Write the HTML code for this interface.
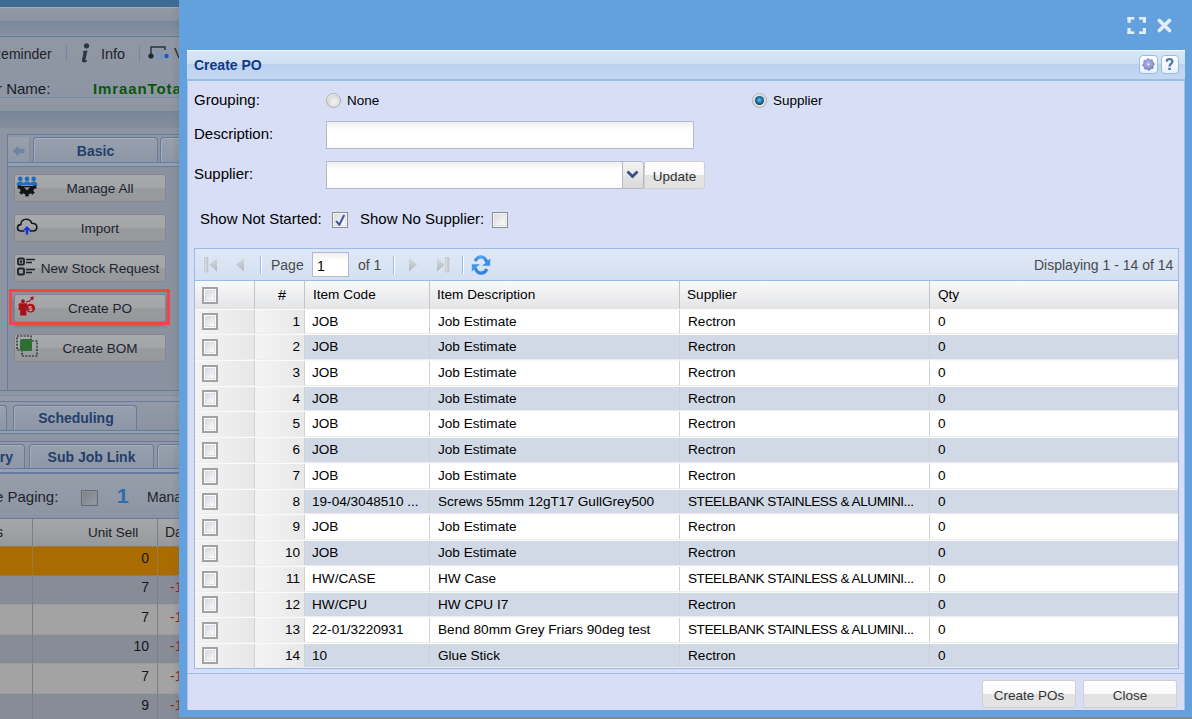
<!DOCTYPE html>
<html><head><meta charset="utf-8">
<style>
*{box-sizing:border-box;margin:0;padding:0}
html,body{width:1192px;height:719px;overflow:hidden;background:#86888c;font-family:"Liberation Sans",sans-serif}
.abs{position:absolute}
#bg{position:absolute;left:0;top:0;width:1192px;height:719px;overflow:hidden}
#modal{position:absolute;left:179px;top:0;width:1013px;height:717px;background:#62a1dd}
.ph{position:absolute;left:187px;top:50px;width:998px;height:31px;background:linear-gradient(#d8e6f5 0,#cfdff3 13px,#b9cfee 13px,#bdd2ef 14.5px,#c5d8f1 28px);border-top:1px solid #f4f8fd;border-bottom:2px solid #99bbe8}
.pt{position:absolute;left:194px;top:57px;font-weight:bold;font-size:14px;color:#0f3b85}
.body{position:absolute;left:187px;top:81px;width:998px;height:629px;background:#d7def6;border-left:1px solid #aac4ec;border-right:1px solid #a4c0ea}
.lbl{position:absolute;font-size:15px;color:#000;line-height:17px}
.inp{position:absolute;background:#fff linear-gradient(#eef0f1,#fff 8px);border:1px solid #b5b8c8}
.radio{position:absolute;width:15px;height:15px;border-radius:50%;background:radial-gradient(circle at 55% 60%,#f4f4f4 0,#e2e2e2 45%,#d6d6d6 62%,#f2f2f2 68%,#cfcfcf 85%);border:1.5px solid #b0b0b0}
.cbx{position:absolute;width:16px;height:16px;border:1.5px solid #8e8e8e;background:linear-gradient(135deg,#d2d6de,#f6f6f6 70%);box-shadow:inset 0 0 0 1px #f4f4f4,inset 0 0 0 2px #e0e2e6}
.btn{position:absolute;border:1px solid #d0d0d0;border-radius:3px 3px 2px 2px;background:linear-gradient(#fff 0,#f9f9f9 50%,#e3e3e3 50%,#e3e3e3 100%);color:#333;font-size:14px;text-align:center}
#grid{position:absolute;left:194px;top:248px;width:985px;height:421px;border:1px solid #99bbe8;background:#fff;overflow:hidden}
.tb{position:absolute;left:195px;top:249px;width:983px;height:32px;background:linear-gradient(#dfe8f6,#d3e0f2);border-bottom:1px solid #99bbe8}
.hd{position:absolute;left:195px;top:281px;width:983px;height:28px;background:linear-gradient(#f9f9f9,#e3e4e6)}
.hc{position:absolute;top:281px;height:28px;font-size:13.6px;color:#000;padding-left:9px;line-height:28px;border-right:1px solid #c5c5c5}
.row{position:absolute;left:195px;width:983px;background:#fff;border-top:1px solid #fafafa;border-bottom:1px solid #ededed}
.row.alt{background:#d1d9e6}
.row .c0{position:absolute;left:0;top:0;bottom:0;width:60px;background:linear-gradient(90deg,#f4f4f4,#e7e7e7);border-right:1px solid #d0d0d0}
.row .c1{position:absolute;left:60px;top:0;bottom:0;width:50px;background:linear-gradient(90deg,#f4f4f4,#e8e8e8);border-right:1px solid #d0d0d0;font-size:13.6px;text-align:right;padding-right:4px;line-height:15px}
.row .cc{position:absolute;top:0;bottom:0;font-size:13.6px;padding-left:8px;line-height:15px;border-right:1px solid #d0d0d0;white-space:nowrap;overflow:hidden}

.cb{position:absolute;width:16px;height:17px;border:2px solid #a2a2a2;background:linear-gradient(135deg,#cdd1da,#f7f7f7 75%);box-shadow:inset 0 0 0 1px #fbfbfb,inset 0 0 0 2px #dcdfe5}
.pg{position:absolute;font-size:14px;color:#4a4a4a;line-height:16px}
.bt{color:#1f232b;line-height:17px;white-space:nowrap}
.tab{border:1px solid #657b9f;border-bottom:0;border-radius:4px 4px 0 0;background:linear-gradient(#97a0ae,#8d96a5);box-shadow:inset 1px 1px 0 #a4acb8;font-size:14px;font-weight:bold;color:#223f6c;text-align:center;line-height:25px;white-space:nowrap;overflow:hidden}
.lb{left:14px;width:152px;height:28px;border:1px solid #86878a;border-radius:3px;background:linear-gradient(#a8a9ab 0,#a4a5a7 50%,#9a9b9e 50%,#97989b 100%);font-size:13.5px;color:#1c2433;text-align:center;line-height:27px;white-space:nowrap;padding-left:20px}
.gt{font-size:14px;color:#1a1d22;line-height:17px;white-space:nowrap}
.gn{left:100px;width:49px;text-align:right;font-size:14px;color:#14171c;line-height:17px}
.rd{left:170px;font-size:14px;color:#a41414;line-height:17px}
.sep{position:absolute;width:2px;border-left:1px solid #99bbe8;border-right:1px solid #fff}
</style></head><body>
<div id="bg">
<div class="abs" style="left:0;top:0;width:179px;height:719px;background:#8d94a2"></div>
<div class="abs" style="left:0;top:0;width:179px;height:7px;background:#3f6a94"></div>
<div class="abs" style="left:0;top:7px;width:179px;height:1px;background:#a6a9ae"></div>
<div class="abs" style="left:0;top:8px;width:179px;height:13px;background:linear-gradient(#939aa5,#8a93a0)"></div>
<div class="abs" style="left:0;top:21px;width:179px;height:1px;background:#7489a3"></div>
<div class="abs" style="left:0;top:22px;width:179px;height:14px;background:linear-gradient(#7a889b,#8692a2)"></div>
<div class="abs" style="left:0;top:36px;width:179px;height:1px;background:#64799a"></div>
<div class="abs" style="left:0;top:37px;width:179px;height:60px;background:linear-gradient(#9097a4,#8d94a3)"></div>
<!-- toolbar -->
<div class="abs bt" style="left:-9px;top:45.5px;font-size:14px">Reminder</div>
<div class="abs" style="left:66px;top:45px;width:1px;height:17px;background:#6f87aa"></div>
<svg class="abs" style="left:80px;top:43px" width="10" height="20" viewBox="0 0 10 20"><circle cx="6.5" cy="2.8" r="2.6" fill="#2c3440"/><path d="M3.5 8L7.5 7.5L5.5 16Q5 18 7 17L6.5 19Q1.5 20.5 2 17L3.6 9.5L2.6 9.2Z" fill="#2c3440"/></svg>
<div class="abs bt" style="left:101px;top:46px;font-size:14.5px">Info</div>
<div class="abs" style="left:139px;top:45px;width:1px;height:17px;background:#6f87aa"></div>
<svg class="abs" style="left:148px;top:45px" width="22" height="15" viewBox="0 0 22 15"><path d="M3 10V2H17V5" fill="none" stroke="#2c3440" stroke-width="1.5"/><circle cx="3" cy="11" r="2.6" fill="#1e2430"/><rect x="9" y="9" width="5" height="4" fill="none" stroke="#6b9ad0" stroke-width="1.2"/><circle cx="18.5" cy="11" r="2.2" fill="#1f55c8"/></svg>
<div class="abs bt" style="left:174px;top:44px;font-size:15px">V</div>
<!-- name row -->
<div class="abs" style="left:-3px;top:80px;font-size:15px;color:#1a1d24">r Name:</div>
<div class="abs" style="left:93px;top:80px;font-size:15px;letter-spacing:0.9px;font-weight:bold;color:#0b550b;white-space:nowrap">ImraanTotal</div>
<div class="abs" style="left:0;top:97px;width:179px;height:1px;background:#7489a6"></div>
<div class="abs" style="left:0;top:98px;width:179px;height:14px;background:linear-gradient(#9299a4,#8b94a0)"></div>
<div class="abs" style="left:0;top:111px;width:179px;height:1px;background:#71849e"></div><div class="abs" style="left:0;top:112px;width:179px;height:16px;background:linear-gradient(#798799,#838e9e)"></div>
<div class="abs" style="left:0;top:128px;width:179px;height:6px;background:#8d94a2"></div>
<!-- left tab panel -->
<div class="abs" style="left:7px;top:134px;width:180px;height:257px;border:1px solid #657b9f;background:#8a91a0"></div>
<div class="abs" style="left:8px;top:135px;width:172px;height:27px;background:linear-gradient(#8f96a4,#8a92a1)"></div>
<div class="abs" style="left:8px;top:137px;width:22px;height:25px;background:linear-gradient(#98a0ad,#8f98a6);border-right:1px solid #7f8ea6"></div>
<svg class="abs" style="left:12px;top:145px" width="13" height="12" viewBox="0 0 13 12"><path d="M6.5 0.5L0.8 6L6.5 11.5V8.2H12.5V3.8H6.5Z" fill="#6d84a5"/></svg>
<div class="abs tab" style="left:33px;top:137px;width:125px;height:26px;line-height:27px">Basic</div>
<div class="abs tab" style="left:160px;top:137px;width:60px;height:26px"></div>
<div class="abs" style="left:8px;top:162px;width:172px;height:1px;background:#657b9f"></div>
<div class="abs" style="left:8px;top:163px;width:172px;height:3px;background:#96a0b0"></div>
<div class="abs" style="left:8px;top:166px;width:172px;height:1px;background:#657b9f"></div>
<div class="abs lb" style="top:174px">Manage All</div>
<div class="abs lb" style="top:214px">Import</div>
<div class="abs lb" style="top:254px">New Stock Request</div>
<div class="abs lb" style="top:294px;box-shadow:0 3px 4px rgba(40,45,60,.45)">Create PO</div>
<div class="abs" style="left:9px;top:289px;width:161px;height:36px;border:3px solid #f24646"></div>
<div class="abs lb" style="top:334px">Create BOM</div>
<!-- icons -->
<svg class="abs" style="left:16px;top:176px" width="22" height="22" viewBox="0 0 22 22"><g fill="#1b6fc0"><circle cx="4.3" cy="2.9" r="2.3"/><circle cx="11" cy="2.9" r="2.3"/><circle cx="17.7" cy="2.9" r="2.3"/><path d="M0.6 9.2Q0.6 5.6 4.3 5.6Q8 5.6 8 9.2Z"/><path d="M7.3 9.2Q7.3 5.6 11 5.6Q14.7 5.6 14.7 9.2Z"/><path d="M14 9.2Q14 5.6 17.7 5.6Q21.4 5.6 21.4 9.2Z"/></g><rect x="2" y="10" width="18" height="1.2" fill="#121418"/><g fill="#121418"><path d="M3.6 11A7.4 7.4 0 0 0 18.4 11Z"/><rect x="9.3" y="17.2" width="3.4" height="3.2" transform="rotate(-90 11 11)"/><rect x="9.3" y="17.2" width="3.4" height="3.2" transform="rotate(-45 11 11)"/><rect x="9.3" y="17.2" width="3.4" height="3.2" transform="rotate(0 11 11)"/><rect x="9.3" y="17.2" width="3.4" height="3.2" transform="rotate(45 11 11)"/><rect x="9.3" y="17.2" width="3.4" height="3.2" transform="rotate(90 11 11)"/></g><path d="M8 11.2H14L11 14.6Z" fill="#8e9096"/></svg>
<svg class="abs" style="left:16px;top:217px" width="22" height="18" viewBox="0 0 22 18"><path d="M8.5 14H5Q1.5 14 1.5 10.8Q1.5 7.8 4.8 7.6Q5.2 2.2 10.2 2.2Q14.5 2.2 15.8 6.2Q20.8 6.2 20.8 10.2Q20.8 14 17 14H13.5" fill="none" stroke="#15181e" stroke-width="1.6"/><path d="M11 9L7.2 13H9.7V17.5H12.3V13H14.8Z" fill="#1436d8"/></svg>
<svg class="abs" style="left:17px;top:257px" width="20" height="20" viewBox="0 0 20 20"><rect x="1" y="1.5" width="6" height="6" rx="1" fill="none" stroke="#1e222a" stroke-width="1.8"/><rect x="2.8" y="3.3" width="2.4" height="2.4" fill="#1e222a"/><path d="M9 2.5H18M9 5.5H15" stroke="#1e222a" stroke-width="1.6"/><rect x="1" y="11.5" width="6" height="6" rx="1" fill="none" stroke="#1e222a" stroke-width="1.8"/><path d="M9 12.5H18M9 15.5H15" stroke="#1e222a" stroke-width="1.6"/></svg>
<svg class="abs" style="left:16px;top:294px" width="20" height="24" viewBox="0 0 20 24"><g fill="#a8101a"><circle cx="7" cy="7.2" r="1.9"/><path d="M2.6 10.5Q2.6 9.2 4 9.2H10Q11.2 9.2 11.4 10.5L11.6 13.5H10.4V21.5H4.2V16H2.6Z"/><circle cx="14.6" cy="14.2" r="4.4"/><path d="M10 7.4Q13 7.2 15 5L14 3.6L17.8 2.2L17.2 6.2L16 5.6Q13.6 8.8 10 8.6Z"/></g><text x="12.3" y="17.2" font-size="7.5" font-family="Liberation Sans" font-weight="bold" fill="#d8a0a4">$</text></svg>
<svg class="abs" style="left:16px;top:335px" width="22" height="22" viewBox="0 0 22 22"><rect x="1" y="1" width="14" height="14" fill="none" stroke="#15181e" stroke-width="1.2" stroke-dasharray="2 1.3"/><rect x="6" y="6" width="15" height="15" fill="none" stroke="#15181e" stroke-width="1.2" stroke-dasharray="2 1.3"/><rect x="4" y="4" width="12" height="12" rx="2" fill="#2f6f35"/></svg>
<!-- tabs 2 -->
<div class="abs" style="left:0;top:390px;width:179px;height:1px;background:#657b9f"></div>
<div class="abs" style="left:0;top:391px;width:179px;height:4px;background:#8f96a3"></div>
<div class="abs" style="left:0;top:395px;width:179px;height:1px;background:#7b8ca6"></div>
<div class="abs" style="left:0;top:396px;width:179px;height:6px;background:#949aa6"></div>
<div class="abs" style="left:0;top:401px;width:179px;height:1px;background:#657b9f"></div>
<div class="abs" style="left:0;top:402px;width:179px;height:28px;background:linear-gradient(#939aa6,#8b93a1)"></div>
<div class="abs tab" style="left:-60px;top:405px;width:67px;height:26px"></div>
<div class="abs tab" style="left:13px;top:405px;width:124px;height:26px;padding-left:2px">Scheduling</div>
<div class="abs" style="left:0;top:430px;width:179px;height:1px;background:#657b9f"></div>
<div class="abs" style="left:0;top:431px;width:179px;height:3px;background:#96a0b0"></div>
<div class="abs" style="left:0;top:433px;width:179px;height:1px;background:#657b9f"></div>
<div class="abs" style="left:0;top:434px;width:179px;height:7px;background:#8f96a3"></div>
<div class="abs" style="left:0;top:441px;width:179px;height:1px;background:#657b9f"></div>
<div class="abs" style="left:0;top:442px;width:179px;height:27px;background:linear-gradient(#939aa6,#8b93a1)"></div>
<div class="abs tab" style="left:-100px;top:444px;width:125px;height:25px;text-align:right;padding-right:11px">ry</div>
<div class="abs tab" style="left:29px;top:444px;width:125px;height:25px">Sub Job Link</div>
<div class="abs tab" style="left:157px;top:444px;width:60px;height:25px"></div>
<div class="abs" style="left:0;top:468px;width:179px;height:1px;background:#657b9f"></div>
<div class="abs" style="left:0;top:469px;width:179px;height:3px;background:#96a0b0"></div>
<div class="abs" style="left:0;top:472px;width:179px;height:2px;background:#657b9f"></div>
<!-- toolbar -->
<div class="abs" style="left:0;top:474px;width:179px;height:44px;background:linear-gradient(#979ea9,#8c94a3)"></div>
<div class="abs" style="left:-5px;top:488px;font-size:15px;color:#1f232b">e Paging:</div>
<div class="abs" style="left:81px;top:490px;width:17px;height:16px;border:1px solid #656a72;background:linear-gradient(135deg,#7a7e86,#9a9ea4);box-shadow:inset 0 0 0 1px #8e9197"></div>
<div class="abs" style="left:117px;top:484px;font-size:21px;font-weight:bold;color:#2a6cb0">1</div>
<div class="abs" style="left:147px;top:489px;font-size:14px;color:#1f232b">Manage</div>
<div class="abs" style="left:0;top:518px;width:179px;height:1px;background:#657b9f"></div>
<!-- grid header -->
<div class="abs" style="left:0;top:519px;width:179px;height:27px;background:linear-gradient(#a6a7a9,#98999c)"></div>
<div class="abs" style="left:32px;top:519px;width:1px;height:200px;background:#7e7f82"></div>
<div class="abs" style="left:157px;top:519px;width:1px;height:200px;background:#7e7f82"></div>
<div class="abs gt" style="left:-4px;top:524px">s</div>
<div class="abs gt" style="left:88px;top:524px;font-size:13.5px">Unit Sell</div>
<div class="abs gt" style="left:165px;top:524px">Date</div>
<!-- rows -->
<div class="abs" style="left:0;top:546px;width:179px;height:30px;background:#a96c00;border-top:1px dotted #858b94;border-bottom:1px dotted #858b94"></div>
<div class="abs" style="left:32px;top:546px;width:1px;height:30px;border-left:1px dotted #858b94"></div>
<div class="abs" style="left:157px;top:546px;width:1px;height:30px;border-left:1px dotted #858b94"></div>
<div class="abs" style="left:0;top:576px;width:179px;height:28px;background:#878c96"></div>
<div class="abs" style="left:0;top:604px;width:179px;height:1px;background:#9c9c9c"></div>
<div class="abs" style="left:0;top:605px;width:179px;height:29px;background:#a3a3a3"></div>
<div class="abs" style="left:0;top:634px;width:179px;height:1px;background:#9c9c9c"></div>
<div class="abs" style="left:0;top:635px;width:179px;height:28px;background:#878c96"></div>
<div class="abs" style="left:0;top:663px;width:179px;height:1px;background:#9c9c9c"></div>
<div class="abs" style="left:0;top:664px;width:179px;height:29px;background:#a3a3a3"></div>
<div class="abs" style="left:0;top:693px;width:179px;height:1px;background:#9c9c9c"></div>
<div class="abs" style="left:0;top:694px;width:179px;height:25px;background:#878c96"></div>
<div class="abs" style="left:32px;top:576px;width:1px;height:143px;background:#7e7f82"></div>
<div class="abs" style="left:157px;top:576px;width:1px;height:143px;background:#7e7f82"></div>
<div class="abs gn" style="top:550px">0</div>
<div class="abs gn" style="top:579px">7</div>
<div class="abs gn" style="top:609px">7</div>
<div class="abs gn" style="top:638px">10</div>
<div class="abs gn" style="top:668px">7</div>
<div class="abs gn" style="top:697px">9</div>
<div class="abs rd" style="top:579px">-1</div>
<div class="abs rd" style="top:609px">-1</div>
<div class="abs rd" style="top:638px">-1</div>
<div class="abs rd" style="top:668px">-1</div>
<div class="abs rd" style="top:697px">-1</div>
<div class="abs" style="left:171px;top:7px;width:8px;height:712px;background:linear-gradient(90deg,rgba(110,100,90,0),rgba(110,100,90,.18))"></div>

</div>
<div id="modal">
  <svg class="abs" style="left:948px;top:17px" width="20" height="18" viewBox="0 0 20 18"><g fill="#e4edf9"><rect x="0.5" y="0" width="6.8" height="2.6"/><rect x="0.5" y="0" width="3.2" height="5.8"/><rect x="12" y="0" width="7" height="2.6"/><rect x="15.8" y="0" width="3.2" height="5.8"/><rect x="0.5" y="11" width="3.2" height="6"/><rect x="0.5" y="14.4" width="6.8" height="2.6"/><rect x="15.8" y="11" width="3.2" height="6"/><rect x="12" y="14.4" width="7" height="2.6"/></g></svg>
  <svg class="abs" style="left:976px;top:16px" width="19" height="19" viewBox="0 0 19 19"><path d="M4.3 4.5L14.5 14.5M14.5 4.5L4.3 14.5" stroke="#e4edf9" stroke-width="3.7" stroke-linecap="round"/></svg>
</div>
<div class="ph"></div>
<div class="pt">Create PO</div>
<div class="abs" style="left:1139px;top:55px;width:19px;height:19px;border:1px solid #99bbe8;border-radius:4px;background:linear-gradient(#fff,#e8f1fb)"></div>
<svg class="abs" style="left:1141px;top:57px" width="15" height="15" viewBox="0 0 15 15"><defs><radialGradient id="gg" cx="0.45" cy="0.4" r="0.6"><stop offset="0" stop-color="#b4b8ec"/><stop offset="1" stop-color="#7c80c4"/></radialGradient></defs><path d="M6.35 1.71 L7.50 1.60 L8.48 2.60 L9.41 2.88 L10.78 2.59 L11.67 3.33 L11.66 4.72 L12.12 5.59 L13.29 6.35 L13.40 7.50 L12.40 8.48 L12.12 9.41 L12.41 10.78 L11.67 11.67 L10.28 11.66 L9.41 12.12 L8.65 13.29 L7.50 13.40 L6.52 12.40 L5.59 12.12 L4.22 12.41 L3.33 11.67 L3.34 10.28 L2.88 9.41 L1.71 8.65 L1.60 7.50 L2.60 6.52 L2.88 5.59 L2.59 4.22 L3.33 3.33 L4.72 3.34 L5.59 2.88Z" fill="url(#gg)" stroke="#6e72b6" stroke-width="0.5"/><circle cx="7.5" cy="7.5" r="0.9" fill="#fff"/></svg>
<div class="abs" style="left:1161px;top:55px;width:18px;height:19px;border:1px solid #99bbe8;border-radius:4px;background:linear-gradient(#fff,#e8f1fb)"></div>
<svg class="abs" style="left:1165px;top:58px" width="9" height="13" viewBox="0 0 9 13"><path d="M1.6 3.6Q1.8 1.2 4.5 1.2Q7.4 1.2 7.4 3.6Q7.4 5 5.8 6Q4.6 6.8 4.6 8.4" fill="none" stroke="#4b7aac" stroke-width="2.3"/><rect x="3.4" y="9.8" width="2.4" height="2.2" rx="0.5" fill="#4b7aac"/></svg>
<div class="body"></div>
<div class="lbl" style="left:194px;top:91px">Grouping:</div>
<div class="lbl" style="left:194px;top:125px">Description:</div>
<div class="lbl" style="left:194px;top:165px">Supplier:</div>
<div class="radio" style="left:326px;top:93px"></div>
<div class="lbl" style="left:347px;top:92px;font-size:13.5px">None</div>
<div class="radio" style="left:752px;top:93px"></div>
<div class="abs" style="left:755px;top:96px;width:9px;height:9px;border-radius:50%;background:radial-gradient(circle at 50% 45%,#6ccaf4 0,#2a90d0 28%,#1a5a88 55%,#13344f 80%)"></div>
<div class="lbl" style="left:773px;top:92px;font-size:13.5px">Supplier</div>
<div class="inp" style="left:326px;top:121px;width:368px;height:28px"></div>
<div class="inp" style="left:326px;top:161px;width:297px;height:28px"></div>
<div class="abs" style="left:622px;top:161px;width:22px;height:28px;border:1px solid #b5b8c8;border-left:1px solid #b5b8c8;border-radius:0 3px 0 0;background:linear-gradient(#f3f3f3,#d9d9d9)"></div>
<svg class="abs" style="left:626px;top:170px" width="13" height="9" viewBox="0 0 13 9"><path d="M1.5 1.5L6.5 6.5L11.5 1.5" fill="none" stroke="#34518c" stroke-width="2.8"/></svg>
<div class="btn" style="left:644px;top:161px;width:61px;height:28px;line-height:29px;font-size:13.5px">Update</div>
<div class="lbl" style="left:200px;top:210px">Show Not Started:</div>
<div class="cbx" style="left:332px;top:212px"></div>
<svg class="abs" style="left:332px;top:212px" width="16" height="16" viewBox="0 0 16 16"><path d="M4.6 9.6L7.4 12.8L11.8 3.8" fill="none" stroke="#4558a8" stroke-width="2.1" stroke-linecap="round" stroke-linejoin="round"/></svg>
<div class="lbl" style="left:360px;top:210px">Show No Supplier:</div>
<div class="cbx" style="left:492px;top:212px"></div>

<div id="grid"></div>
<div class="tb"></div>

<svg width="0" height="0" style="position:absolute"><defs><linearGradient id="tg" x1="0" y1="0" x2="0" y2="1"><stop offset="0" stop-color="#d6d9de"/><stop offset="1" stop-color="#b4b8be"/></linearGradient><linearGradient id="bg2" x1="0" y1="0" x2="1" y2="0"><stop offset="0" stop-color="#e4e6ea"/><stop offset="1" stop-color="#b8bcc2"/></linearGradient><linearGradient id="rg" x1="0" y1="0" x2="0" y2="1"><stop offset="0" stop-color="#52a4f0"/><stop offset="1" stop-color="#2a7ad8"/></linearGradient></defs></svg>
<svg class="abs" style="left:204px;top:257px" width="14" height="16" viewBox="0 0 14 16"><rect x="0.5" y="0.5" width="3.4" height="14.5" fill="url(#bg2)" stroke="#c4c8ce" stroke-width="0.8"/><path d="M13 1V14.5L5.5 7.75Z" fill="url(#tg)"/></svg>
<svg class="abs" style="left:235px;top:257px" width="10" height="16" viewBox="0 0 10 16"><path d="M9 1V14.5L1 7.75Z" fill="url(#tg)"/></svg>
<div class="sep" style="left:260px;top:256px;height:18px"></div>
<div class="pg" style="left:271px;top:257px">Page</div>
<div class="inp" style="left:312px;top:252px;width:37px;height:25px"></div>
<div class="pg" style="left:317px;top:258px;color:#000">1</div>
<div class="pg" style="left:358px;top:257px">of 1</div>
<div class="sep" style="left:393px;top:256px;height:18px"></div>
<svg class="abs" style="left:408px;top:257px" width="10" height="16" viewBox="0 0 10 16"><path d="M1 1V14.5L9 7.75Z" fill="url(#tg)"/></svg>
<svg class="abs" style="left:436px;top:257px" width="14" height="16" viewBox="0 0 14 16"><path d="M1 1V14.5L8.5 7.75Z" fill="url(#tg)"/><rect x="9.3" y="0.5" width="3.6" height="14.5" fill="url(#bg2)" stroke="#c4c8ce" stroke-width="0.8"/></svg>
<div class="sep" style="left:462px;top:256px;height:18px"></div>
<svg class="abs" style="left:468px;top:252px" width="26" height="26" viewBox="0 0 26 26"><path d="M7.2 9Q9 4.8 13.2 4.8Q16.8 4.8 18.8 9.8" fill="none" stroke="url(#rg)" stroke-width="3.2"/><path d="M14.2 13.8H22.2V6.6Z" fill="#3d8fe6"/><path d="M18.8 17Q17 21.2 12.8 21.2Q9.2 21.2 7.2 16.2" fill="none" stroke="#2f84e0" stroke-width="3.2"/><path d="M11.8 12.2H3.8V19.4Z" fill="#4596ea"/></svg>
<div class="pg" style="left:1034px;top:257px">Displaying 1 - 14 of 14</div>

<div class="hd"></div>
<div class="hc" style="left:195px;width:60px;padding:0"></div>
<div class="cb" style="left:202px;top:287px"></div>
<div class="hc" style="left:255px;width:50px;text-align:right;padding-right:18px;font-size:14.5px">#</div>
<div class="hc" style="left:305px;width:125px;padding-left:8px">Item Code</div>
<div class="hc" style="left:430px;width:250px;padding-left:7px">Item Description</div>
<div class="hc" style="left:680px;width:250px;padding-left:7px">Supplier</div>
<div class="hc" style="left:930px;width:248px;border-right:0;padding-left:8px">Qty</div>
<div class="row" style="top:309px;height:25px">
<div class="c0"></div><div class="c1" style="padding-top:4px">1</div><div class="cc" style="left:109px;width:126px;padding-top:4px">JOB</div><div class="cc" style="left:235px;width:250px;padding-top:4px">Job Estimate</div><div class="cc" style="left:485px;width:250px;padding-top:4px"><span>Rectron</span></div><div class="cc" style="left:735px;width:248px;border-right:0;padding-top:4px">0</div>
<div class="cb" style="left:7px;top:3px"></div>
</div><div class="row alt" style="top:334px;height:26px">
<div class="c0"></div><div class="c1" style="padding-top:4px">2</div><div class="cc" style="left:109px;width:126px;padding-top:4px">JOB</div><div class="cc" style="left:235px;width:250px;padding-top:4px">Job Estimate</div><div class="cc" style="left:485px;width:250px;padding-top:4px"><span>Rectron</span></div><div class="cc" style="left:735px;width:248px;border-right:0;padding-top:4px">0</div>
<div class="cb" style="left:7px;top:4px"></div>
</div><div class="row" style="top:360px;height:26px">
<div class="c0"></div><div class="c1" style="padding-top:4px">3</div><div class="cc" style="left:109px;width:126px;padding-top:4px">JOB</div><div class="cc" style="left:235px;width:250px;padding-top:4px">Job Estimate</div><div class="cc" style="left:485px;width:250px;padding-top:4px"><span>Rectron</span></div><div class="cc" style="left:735px;width:248px;border-right:0;padding-top:4px">0</div>
<div class="cb" style="left:7px;top:4px"></div>
</div><div class="row alt" style="top:386px;height:25px">
<div class="c0"></div><div class="c1" style="padding-top:4px">4</div><div class="cc" style="left:109px;width:126px;padding-top:4px">JOB</div><div class="cc" style="left:235px;width:250px;padding-top:4px">Job Estimate</div><div class="cc" style="left:485px;width:250px;padding-top:4px"><span>Rectron</span></div><div class="cc" style="left:735px;width:248px;border-right:0;padding-top:4px">0</div>
<div class="cb" style="left:7px;top:3px"></div>
</div><div class="row" style="top:411px;height:26px">
<div class="c0"></div><div class="c1" style="padding-top:4px">5</div><div class="cc" style="left:109px;width:126px;padding-top:4px">JOB</div><div class="cc" style="left:235px;width:250px;padding-top:4px">Job Estimate</div><div class="cc" style="left:485px;width:250px;padding-top:4px"><span>Rectron</span></div><div class="cc" style="left:735px;width:248px;border-right:0;padding-top:4px">0</div>
<div class="cb" style="left:7px;top:4px"></div>
</div><div class="row alt" style="top:437px;height:26px">
<div class="c0"></div><div class="c1" style="padding-top:4px">6</div><div class="cc" style="left:109px;width:126px;padding-top:4px">JOB</div><div class="cc" style="left:235px;width:250px;padding-top:4px">Job Estimate</div><div class="cc" style="left:485px;width:250px;padding-top:4px"><span>Rectron</span></div><div class="cc" style="left:735px;width:248px;border-right:0;padding-top:4px">0</div>
<div class="cb" style="left:7px;top:4px"></div>
</div><div class="row" style="top:463px;height:26px">
<div class="c0"></div><div class="c1" style="padding-top:4px">7</div><div class="cc" style="left:109px;width:126px;padding-top:4px">JOB</div><div class="cc" style="left:235px;width:250px;padding-top:4px">Job Estimate</div><div class="cc" style="left:485px;width:250px;padding-top:4px"><span>Rectron</span></div><div class="cc" style="left:735px;width:248px;border-right:0;padding-top:4px">0</div>
<div class="cb" style="left:7px;top:4px"></div>
</div><div class="row alt" style="top:489px;height:25px">
<div class="c0"></div><div class="c1" style="padding-top:4px">8</div><div class="cc" style="left:109px;width:126px;padding-top:4px">19-04/3048510 ...</div><div class="cc" style="left:235px;width:250px;padding-top:4px">Screws 55mm 12gT17 GullGrey500</div><div class="cc" style="left:485px;width:250px;padding-top:4px"><span style="letter-spacing:-0.45px">STEELBANK STAINLESS &amp; ALUMINI...</span></div><div class="cc" style="left:735px;width:248px;border-right:0;padding-top:4px">0</div>
<div class="cb" style="left:7px;top:3px"></div>
</div><div class="row" style="top:514px;height:26px">
<div class="c0"></div><div class="c1" style="padding-top:4px">9</div><div class="cc" style="left:109px;width:126px;padding-top:4px">JOB</div><div class="cc" style="left:235px;width:250px;padding-top:4px">Job Estimate</div><div class="cc" style="left:485px;width:250px;padding-top:4px"><span>Rectron</span></div><div class="cc" style="left:735px;width:248px;border-right:0;padding-top:4px">0</div>
<div class="cb" style="left:7px;top:4px"></div>
</div><div class="row alt" style="top:540px;height:26px">
<div class="c0"></div><div class="c1" style="padding-top:4px">10</div><div class="cc" style="left:109px;width:126px;padding-top:4px">JOB</div><div class="cc" style="left:235px;width:250px;padding-top:4px">Job Estimate</div><div class="cc" style="left:485px;width:250px;padding-top:4px"><span>Rectron</span></div><div class="cc" style="left:735px;width:248px;border-right:0;padding-top:4px">0</div>
<div class="cb" style="left:7px;top:4px"></div>
</div><div class="row" style="top:566px;height:26px">
<div class="c0"></div><div class="c1" style="padding-top:4px">11</div><div class="cc" style="left:109px;width:126px;padding-top:4px">HW/CASE</div><div class="cc" style="left:235px;width:250px;padding-top:4px">HW Case</div><div class="cc" style="left:485px;width:250px;padding-top:4px"><span style="letter-spacing:-0.45px">STEELBANK STAINLESS &amp; ALUMINI...</span></div><div class="cc" style="left:735px;width:248px;border-right:0;padding-top:4px">0</div>
<div class="cb" style="left:7px;top:4px"></div>
</div><div class="row alt" style="top:592px;height:25px">
<div class="c0"></div><div class="c1" style="padding-top:4px">12</div><div class="cc" style="left:109px;width:126px;padding-top:4px">HW/CPU</div><div class="cc" style="left:235px;width:250px;padding-top:4px">HW CPU I7</div><div class="cc" style="left:485px;width:250px;padding-top:4px"><span>Rectron</span></div><div class="cc" style="left:735px;width:248px;border-right:0;padding-top:4px">0</div>
<div class="cb" style="left:7px;top:3px"></div>
</div><div class="row" style="top:617px;height:26px">
<div class="c0"></div><div class="c1" style="padding-top:4px">13</div><div class="cc" style="left:109px;width:126px;padding-top:4px">22-01/3220931</div><div class="cc" style="left:235px;width:250px;padding-top:4px">Bend 80mm Grey Friars 90deg test</div><div class="cc" style="left:485px;width:250px;padding-top:4px"><span style="letter-spacing:-0.45px">STEELBANK STAINLESS &amp; ALUMINI...</span></div><div class="cc" style="left:735px;width:248px;border-right:0;padding-top:4px">0</div>
<div class="cb" style="left:7px;top:4px"></div>
</div><div class="row alt" style="top:643px;height:25px">
<div class="c0"></div><div class="c1" style="padding-top:4px">14</div><div class="cc" style="left:109px;width:126px;padding-top:4px">10</div><div class="cc" style="left:235px;width:250px;padding-top:4px">Glue Stick</div><div class="cc" style="left:485px;width:250px;padding-top:4px"><span>Rectron</span></div><div class="cc" style="left:735px;width:248px;border-right:0;padding-top:4px">0</div>
<div class="cb" style="left:7px;top:3px"></div>
</div>
<div class="abs" style="left:187px;top:673px;width:998px;height:1px;background:#99bbe8"></div>
<div class="btn" style="left:982px;top:680px;width:94px;height:28px;line-height:29px;font-size:13.5px">Create POs</div>
<div class="btn" style="left:1083px;top:680px;width:94px;height:28px;line-height:29px;font-size:13.5px">Close</div>
</body></html>
